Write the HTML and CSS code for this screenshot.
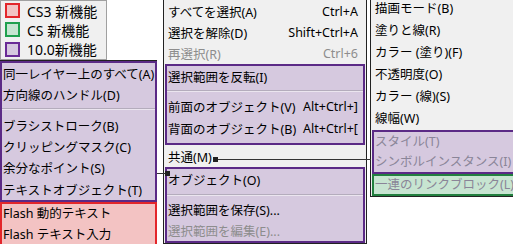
FILE: index.html
```html
<!DOCTYPE html>
<html lang="ja">
<head>
  <meta charset="UTF-8" />
  <title>選択メニュー 新機能</title>
  <link rel="stylesheet" href="styles.css">
</head>
<body>
  <div class="canvas">
    <div class="side">
      <div class="legend">
        <div class="legend-item"><span class="swatch swatch-cs3"></span>CS3 新機能</div>
        <div class="legend-item"><span class="swatch swatch-cs"></span>CS 新機能</div>
        <div class="legend-item"><span class="swatch swatch-v10"></span>10.0新機能</div>
      </div>

      <div class="menu menu-left">
        <div class="group group-v10">
          <div class="item">同一レイヤー上のすべて(A)</div>
          <div class="item">方向線のハンドル(D)</div>
          <div class="sep"></div>
          <div class="item">ブラシストローク(B)</div>
          <div class="item">クリッピングマスク(C)</div>
          <div class="item">余分なポイント(S)</div>
          <div class="item">テキストオブジェクト(T)</div>
        </div>
        <div class="group group-cs3">
          <div class="item">Flash 動的テキスト</div>
          <div class="item">Flash テキスト入力</div>
        </div>
      </div>
    </div>

    <div class="menu menu-mid">
      <div class="item"><span>すべてを選択(A)</span><span>Ctrl+A</span></div>
      <div class="item"><span>選択を解除(D)</span><span>Shift+Ctrl+A</span></div>
      <div class="item disabled"><span>再選択(R)</span><span>Ctrl+6</span></div>
      <div class="group group-v10 box-top">
        <div class="item">選択範囲を反転(I)</div>
        <div class="sep"></div>
        <div class="item"><span>前面のオブジェクト(V)</span><span>Alt+Ctrl+]</span></div>
        <div class="item"><span>背面のオブジェクト(B)</span><span>Alt+Ctrl+[</span></div>
      </div>
      <div class="item item-common">共通(M)</div>
      <div class="group group-v10 box-bottom">
        <div class="item">オブジェクト(O)</div>
        <div class="sep"></div>
        <div class="item">選択範囲を保存(S)...</div>
        <div class="item disabled">選択範囲を編集(E)...</div>
      </div>
    </div>

    <div class="menu menu-right">
      <div class="item">描画モード(B)</div>
      <div class="item">塗りと線(R)</div>
      <div class="item">カラー (塗り)(F)</div>
      <div class="item">不透明度(O)</div>
      <div class="item">カラー (線)(S)</div>
      <div class="item">線幅(W)</div>
      <div class="group group-v10 box-style">
        <div class="item muted">スタイル(T)</div>
        <div class="item muted">シンボルインスタンス(I)</div>
      </div>
      <div class="group group-cs box-link">
        <div class="item muted">一連のリンクブロック(L)</div>
      </div>
    </div>

    <!-- 連結線 -->
    <div class="link link-common"></div>
    <div class="knob knob-common"></div>
    <div class="link link-object"></div>
    <div class="knob knob-object"></div>
  </div>
</body>
</html>
```

FILE: styles.css
```css
* {
  box-sizing: border-box;
}

body {
  margin: 0;
  background: #fff;
  font-family: "Noto Sans", "Noto Sans CJK JP", sans-serif;
  font-size: 12.5px;
  color: #000;
}

.canvas {
  position: relative;
  display: flex;
  width: 513px;
  height: 244px;
  overflow: hidden;
}

.side {
  width: 157px;
  flex-shrink: 0;
  display: flex;
  flex-direction: column;
}

/* 凡例 */
.legend {
  width: 107px;
  height: 60px;
  border: 1px solid #a0a0a0;
  background: #f0f0f0;
  padding-left: 4px;
  font-size: 14px;
}

.legend-item {
  display: flex;
  align-items: center;
  gap: 7px;
  height: 19.3px;
  white-space: nowrap;
}

.swatch {
  width: 15px;
  height: 15px;
  border: 2px solid;
}

.swatch-cs3 { background: #f2c4c4; border-color: #e3262b; }
.swatch-cs  { background: #c7e5d1; border-color: #20a04e; }
.swatch-v10 { background: #d6c9df; border-color: #6a2c96; }

/* メニュー共通 */
.menu {
  background: #f0f0f0;
}

.item {
  display: flex;
  align-items: center;
  justify-content: space-between;
  height: 21px;
  padding: 0 7px 0 3px;
  white-space: nowrap;
}

.disabled {
  color: #8d8d8d;
}

.muted {
  color: #8a8598;
}

.group {
  border: 2px solid;
}

.group .item {
  padding: 0 5px 0 1px;
}

.group-v10 { background: #d6c9df; border-color: #5b2a86; }
.group-cs3 { background: #f3c3c3; border-color: #e3262b; }
.group-cs  { background: #c7e5d1; border-color: #22803f; }

.sep {
  height: 2px;
  margin: 3px 0;
  border-top: 1px solid #b4acbc;
  border-bottom: 1px solid #ebe5ef;
}

/* 左メニュー */
.menu-left {
  border-top: 1px solid #222;
  background: #fff;
}

.menu-left .item {
  height: 21.3px;
}

.menu-left .sep {
  margin: 3px 0 4px;
}

.menu-left .group-cs3 .item {
  height: 21px;
  padding-bottom: 3px;
}

/* 中央メニュー */
.menu-mid {
  width: 204px;
  height: 244px;
  flex-shrink: 0;
  margin-left: 6px;
  padding: 1px 1px 0;
  border: 1px solid #222;
  border-top: none;
}

.box-top {
  padding-bottom: 4px;
}

.box-top .item {
  height: 22px;
}

.box-top .item:first-child {
  height: 21px;
}

.item-common {
  height: 22px;
  padding-top: 1px;
}

.box-bottom {
  padding-top: 1px;
}

.box-bottom .item:first-child {
  padding-bottom: 2px;
}

/* 右メニュー */
.menu-right {
  flex: 1;
  height: 201px;
  margin-top: -4px;
  margin-left: 3px;
  padding-left: 1px;
  border-left: 1px solid #222;
  border-bottom: 1px solid #222;
}

.menu-right .item {
  height: 22px;
}

.box-style {
  margin-top: 2px;
  border-right: none;
}

.menu-right .box-style .item:first-child {
  height: 16px;
}

.menu-right .box-style .item:last-child {
  height: 24px;
}

.box-link {
  border-right: none;
}

.menu-right .box-link .item {
  height: 18px;
  padding-bottom: 4px;
}

/* 連結線 */
.link {
  position: absolute;
  height: 1px;
  background: #333;
}

.knob {
  position: absolute;
  width: 5px;
  height: 5px;
  background: #222;
}

.link-common {
  left: 217px;
  top: 159px;
  width: 154px;
}

.knob-common {
  left: 213px;
  top: 157px;
}

.link-object {
  left: 157px;
  top: 173px;
  width: 9px;
}

.knob-object {
  left: 165px;
  top: 171px;
}
```
